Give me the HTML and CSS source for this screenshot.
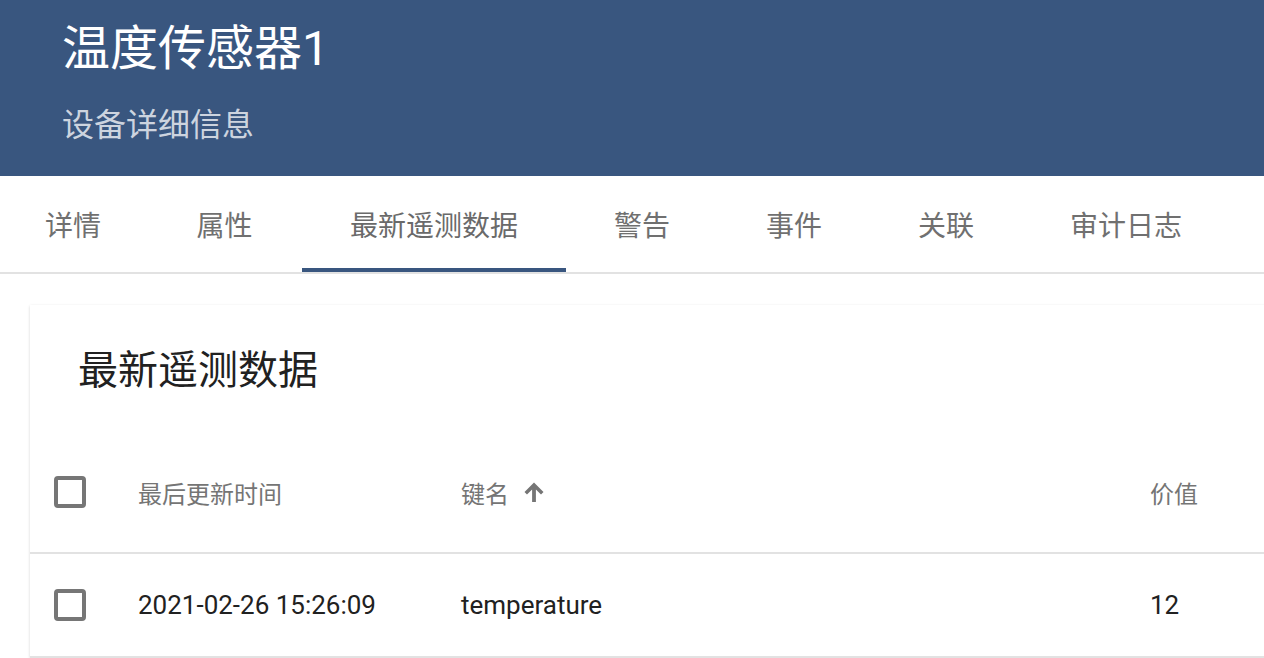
FILE: index.html
```html
<!DOCTYPE html>
<html lang="zh">
<head>
<meta charset="utf-8">
<title>温度传感器1</title>
<link rel="stylesheet" href="styles.css">
</head>
<body>
<header class="hdr">
  <div class="hdr-title">温度传感器1</div>
  <div class="hdr-sub">设备详细信息</div>
</header>
<nav class="tabs">
  <div class="tab">详情</div>
  <div class="tab">属性</div>
  <div class="tab active">最新遥测数据</div>
  <div class="tab">警告</div>
  <div class="tab">事件</div>
  <div class="tab">关联</div>
  <div class="tab">审计日志</div>
</nav>
<section class="card">
  <div class="card-title">最新遥测数据</div>
  <div class="row head">
    <div class="cell cb-cell"><span class="cb"></span></div>
    <div class="cell">最后更新时间</div>
    <div class="cell">键名<svg class="sort" viewBox="0 0 20 20" width="20" height="20"><path d="M10 0.5L19.5 10L17 12.5L11.9 7.4V20H8.1V7.4L3 12.5L0.5 10Z"/></svg></div>
    <div class="cell">价值</div>
  </div>
  <div class="row body">
    <div class="cell cb-cell"><span class="cb"></span></div>
    <div class="cell">2021-02-26 15:26:09</div>
    <div class="cell">temperature</div>
    <div class="cell">12</div>
  </div>
</section>
</body>
</html>
```
FILE: styles.css
```css
html, body {
  margin: 0;
  padding: 0;
  background: #ffffff;
  overflow: hidden;
  width: 1264px;
  height: 658px;
}
body {
  font-family: Roboto, "Noto Sans CJK SC", sans-serif;
}
.hdr {
  height: 176px;
  box-sizing: border-box;
  background: #39567f;
  padding: 21px 0 0 62px;
  display: flex;
  flex-direction: column;
}
.hdr-title {
  font-size: 48px;
  line-height: 56px;
  color: #ffffff;
}
.hdr-sub {
  margin-top: 28px;
  font-size: 32px;
  line-height: 40px;
  color: rgba(255, 255, 255, 0.76);
}
.tabs {
  display: flex;
  height: 96px;
  border-bottom: 2px solid #e2e2e2;
  margin-left: -1px;
}
.tab {
  min-width: 151px;
  box-sizing: border-box;
  padding: 0 48px;
  display: flex;
  align-items: center;
  justify-content: center;
  font-size: 28px;
  color: #707070;
  white-space: nowrap;
}
.tab:first-child {
  min-width: 148px;
  padding-right: 46px;
  padding-left: 46px;
}
.tab:nth-child(2) {
  min-width: 155px;
}
.tab.active {
  box-shadow: inset 0 -4px 0 #39567f;
  color: #6a6a6a;
}
.card {
  margin: 31px 0 0 30px;
  width: 1320px;
  background: #ffffff;
  box-shadow: 0 1px 3px rgba(0, 0, 0, 0.12), 0 1px 2px rgba(0, 0, 0, 0.06);
}
.card-title {
  padding: 42px 0 37px 48px;
  font-size: 40px;
  line-height: 48px;
  color: #212121;
}
.row {
  display: grid;
  grid-template-columns: 108px 323px 689px 1fr;
  border-bottom: 2px solid #e2e2e2;
}
.row.head {
  height: 120px;
  font-size: 24px;
  color: #757575;
}
.row.body {
  height: 102px;
  font-size: 26px;
  color: #212121;
}
.cell {
  display: flex;
  align-items: center;
  white-space: nowrap;
}
.cb-cell {
  padding-left: 24px;
}
.cb {
  display: block;
  width: 32px;
  height: 32px;
  box-sizing: border-box;
  border: 4px solid #767676;
  border-radius: 4px;
}
.sort {
  margin-left: 15px;
  fill: #757575;
}
```
